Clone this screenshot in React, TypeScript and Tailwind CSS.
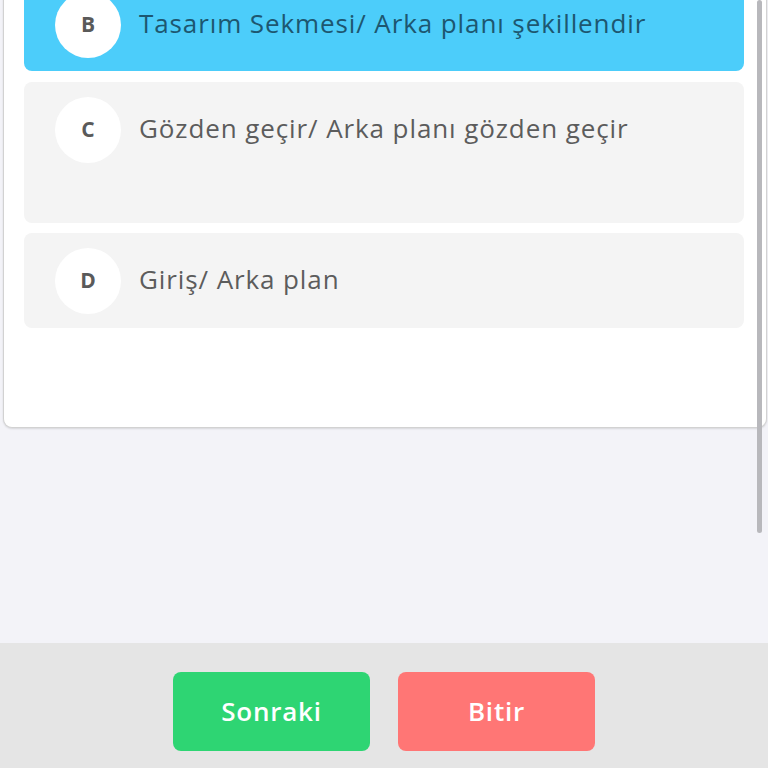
const options = [
  { key: 'B', text: 'Tasarım Sekmesi/ Arka planı şekillendir', selected: true, height: 'h-[94px]', gap: '' },
  { key: 'C', text: 'Gözden geçir/ Arka planı gözden geçir', selected: false, height: 'h-[141px]', gap: 'mt-[11px]' },
  { key: 'D', text: 'Giriş/ Arka plan', selected: false, height: 'h-[95px]', gap: 'mt-[10px]' },
];

function Option({ item }: { item: (typeof options)[number] }) {
  return (
    <div
      className={`${item.height} ${item.gap} flex items-start rounded-[8px] pl-[31px] pt-[15px] ${
        item.selected ? 'bg-[#4ccdfa]' : 'bg-[#f4f4f4]'
      }`}
    >
      <div className="flex h-[66px] w-[66px] shrink-0 items-center justify-center rounded-full bg-white font-['Open_Sans',sans-serif] text-[21px] font-bold text-[#5a5a5a]">
        {item.key}
      </div>
      <span
        className={`ml-[18px] font-['Open_Sans',sans-serif] text-[26px] leading-[62px] tracking-[0.9px] ${
          item.selected ? 'text-[#1d5770]' : 'text-[#5c5c5c]'
        }`}
      >
        {item.text}
      </span>
    </div>
  );
}

export default function App() {
  return (
    <div className="relative flex h-[768px] flex-col overflow-hidden bg-[#f3f3f8] font-['Open_Sans',sans-serif]">
      <div className="min-h-0 flex-1 overflow-hidden">
        <div className="-mt-[23px] ml-[3px] w-[764px] rounded-b-[9px] border-x border-b border-[#d2d2d2] bg-white pb-[99px] pl-[20px] shadow-[0_1px_2px_rgba(0,0,0,0.12)]">
          <div className="w-[720px]">
            {options.map((o) => (
              <Option key={o.key} item={o} />
            ))}
          </div>
        </div>
      </div>

      <div className="flex h-[125px] items-start justify-center gap-[28px] bg-[#e5e5e5] pt-[29px]">
        <button className="h-[79px] w-[197px] rounded-[8px] bg-[#2ed573] text-[26px] font-semibold tracking-[0.8px] text-white">
          Sonraki
        </button>
        <button className="h-[79px] w-[197px] rounded-[8px] bg-[#ff7675] text-[26px] font-semibold tracking-[0.8px] text-white">
          Bitir
        </button>
      </div>

      <div className="absolute left-[757px] top-0 h-[533px] w-[5px] rounded-full bg-[#b8b8bc]" />
    </div>
  );
}
